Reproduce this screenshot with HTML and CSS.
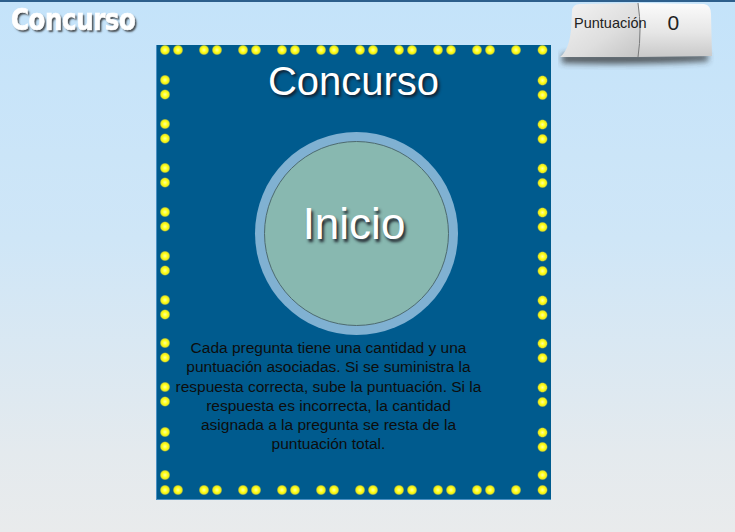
FILE: index.html
```html
<!DOCTYPE html>
<html lang="es">
<head>
<meta charset="utf-8">
<title>Concurso</title>
<link rel="stylesheet" href="styles.css">
</head>
<body>
<header class="topbar">
  <h1 class="app-title">Concurso</h1>
  <div class="score">
    <svg class="score-bg" width="156" height="68" viewBox="0 0 156 68">
      <defs>
        <linearGradient id="paper" x1="0" y1="0" x2="0" y2="1">
          <stop offset="0" stop-color="#fbfbfb"/>
          <stop offset="0.55" stop-color="#e6e6e6"/>
          <stop offset="1" stop-color="#c9c9c9"/>
        </linearGradient>
        <linearGradient id="paperL" x1="0" y1="0" x2="1" y2="1">
          <stop offset="0" stop-color="#f4f4f4"/>
          <stop offset="0.6" stop-color="#dedede"/>
          <stop offset="1" stop-color="#c4c4c4"/>
        </linearGradient>
        <filter id="blur" x="-20%" y="-100%" width="140%" height="300%">
          <feGaussianBlur stdDeviation="3"/>
        </filter>
      </defs>
      <path d="M4 52 L150 52 L150 59 Q80 63 4 61 Z" fill="#303030" opacity="0.8" filter="url(#blur)"/>
      <path d="M14 10 Q14 2 22 2 L80 1 Q84 28 80 55 L2 55 Q11 48 13 28 Z" fill="url(#paperL)"/>
      <path d="M80 1 L146 2 Q153 3 153 12 L154 54 L80 55 Q84 28 80 1 Z" fill="url(#paper)"/>
      <path d="M80 1 Q84 28 80 55" fill="none" stroke="#7a7a7a" stroke-width="1"/>
    </svg>
    <span class="score-label">Puntuación</span>
    <span class="score-value">0</span>
  </div>
</header>

<main class="board">
  <svg class="bulbs" width="395" height="455" viewBox="0 0 395 455" aria-hidden="true">
    <defs>
      <radialGradient id="bulb">
        <stop offset="0" stop-color="#ffffa0"/>
        <stop offset="0.5" stop-color="#ffff10"/>
        <stop offset="0.75" stop-color="#e2e228"/>
        <stop offset="1" stop-color="#8a9a40" stop-opacity="0"/>
      </radialGradient>
      <circle id="b" r="5.5" fill="url(#bulb)"/>
    </defs>
    <!-- top row -->
    <use href="#b" x="9" y="5"/><use href="#b" x="22" y="5"/>
    <use href="#b" x="48" y="5"/><use href="#b" x="61" y="5"/>
    <use href="#b" x="87" y="5"/><use href="#b" x="100" y="5"/>
    <use href="#b" x="126" y="5"/><use href="#b" x="139" y="5"/>
    <use href="#b" x="165" y="5"/><use href="#b" x="178" y="5"/>
    <use href="#b" x="204" y="5"/><use href="#b" x="217" y="5"/>
    <use href="#b" x="243" y="5"/><use href="#b" x="256" y="5"/>
    <use href="#b" x="282" y="5"/><use href="#b" x="295" y="5"/>
    <use href="#b" x="321" y="5"/><use href="#b" x="334" y="5"/>
    <use href="#b" x="360" y="5"/><use href="#b" x="386.5" y="5"/>
    <!-- bottom row -->
    <use href="#b" x="9" y="445"/><use href="#b" x="22" y="445"/>
    <use href="#b" x="48" y="445"/><use href="#b" x="61" y="445"/>
    <use href="#b" x="87" y="445"/><use href="#b" x="100" y="445"/>
    <use href="#b" x="126" y="445"/><use href="#b" x="139" y="445"/>
    <use href="#b" x="165" y="445"/><use href="#b" x="178" y="445"/>
    <use href="#b" x="204" y="445"/><use href="#b" x="217" y="445"/>
    <use href="#b" x="243" y="445"/><use href="#b" x="256" y="445"/>
    <use href="#b" x="282" y="445"/><use href="#b" x="295" y="445"/>
    <use href="#b" x="321" y="445"/><use href="#b" x="334" y="445"/>
    <use href="#b" x="360" y="445"/><use href="#b" x="386.5" y="445"/>
    <!-- left column -->
    <use href="#b" x="9" y="35"/><use href="#b" x="9" y="49.5"/>
    <use href="#b" x="9" y="79"/><use href="#b" x="9" y="93.5"/>
    <use href="#b" x="9" y="123"/><use href="#b" x="9" y="137.5"/>
    <use href="#b" x="9" y="167"/><use href="#b" x="9" y="181.5"/>
    <use href="#b" x="9" y="211"/><use href="#b" x="9" y="225.5"/>
    <use href="#b" x="9" y="255"/><use href="#b" x="9" y="269.5"/>
    <use href="#b" x="9" y="298"/><use href="#b" x="9" y="312.5"/>
    <use href="#b" x="9" y="342"/><use href="#b" x="9" y="356.5"/>
    <use href="#b" x="9" y="387"/><use href="#b" x="9" y="401.5"/>
    <use href="#b" x="9" y="430"/>
    <!-- right column -->
    <use href="#b" x="386.5" y="35.5"/><use href="#b" x="386.5" y="50"/>
    <use href="#b" x="386.5" y="79.5"/><use href="#b" x="386.5" y="94"/>
    <use href="#b" x="386.5" y="123.5"/><use href="#b" x="386.5" y="138"/>
    <use href="#b" x="386.5" y="167.5"/><use href="#b" x="386.5" y="182"/>
    <use href="#b" x="386.5" y="211.5"/><use href="#b" x="386.5" y="226"/>
    <use href="#b" x="386.5" y="255.5"/><use href="#b" x="386.5" y="270"/>
    <use href="#b" x="386.5" y="298.5"/><use href="#b" x="386.5" y="313"/>
    <use href="#b" x="386.5" y="342.5"/><use href="#b" x="386.5" y="357"/>
    <use href="#b" x="386.5" y="387.5"/><use href="#b" x="386.5" y="402"/>
    <use href="#b" x="386.5" y="430"/>
  </svg>

  <h2 class="board-title">Concurso</h2>
  <div class="start-ring">
    <button class="start-btn" type="button">Inicio</button>
  </div>
  <p class="rules">Cada pregunta tiene una cantidad y una puntuación asociadas. Si se suministra la respuesta correcta, sube la puntuación. Si la respuesta es incorrecta, la cantidad asignada a la pregunta se resta de la puntuación total.</p>
</main>
</body>
</html>
```

FILE: styles.css
```css
html {
  margin: 0;
  height: 100%;
}

body {
  margin: 0;
  min-height: 532px;
  box-sizing: border-box;
  border-top: 2px solid #2d5f8c;
  background: linear-gradient(to bottom, #c4e3fa 0%, #cfe6f7 45%, #e4eaee 85%, #e9ebec 100%);
  font-family: "Liberation Sans", Arial, sans-serif;
  overflow: hidden;
}

.topbar {
  display: flex;
  justify-content: space-between;
  align-items: flex-start;
  height: 43px;
  padding: 0 21px 0 11px;
}

.app-title {
  margin: 0;
  font-family: "DejaVu Sans", sans-serif;
  font-weight: bold;
  font-stretch: condensed;
  font-size: 31px;
  line-height: 34px;
  color: #ffffff;
  letter-spacing: -0.5px;
  -webkit-text-stroke: 0.7px #ffffff;
  transform: scaleX(0.88);
  transform-origin: left center;
  text-shadow: 2px 2px 2px rgba(40, 40, 40, 0.8);
}

.score {
  position: relative;
  width: 156px;
  height: 68px;
  display: flex;
  align-items: flex-start;
  padding-left: 16px;
  box-sizing: border-box;
}

.score-bg {
  position: absolute;
  left: 0;
  top: 0;
}

.score-label {
  position: relative;
  margin-top: 13px;
  font-size: 14.5px;
  line-height: 17px;
  color: #222;
}

.score-value {
  position: relative;
  margin-top: 9px;
  margin-left: 21px;
  font-size: 21px;
  line-height: 24px;
  color: #222;
}

.board {
  position: relative;
  width: 395px;
  height: 455px;
  margin-left: 156px;
  box-sizing: border-box;
  padding-top: 13px;
  background: #005b8e;
  box-shadow: inset 1px -1px 0 #4a8fc2;
  display: flex;
  flex-direction: column;
}

.bulbs {
  position: absolute;
  left: 0;
  top: 0;
}

.board-title {
  position: relative;
  margin: 0;
  text-align: center;
  font-size: 40px;
  line-height: 46px;
  font-weight: normal;
  color: #ffffff;
  text-shadow: 2px 2px 3px rgba(20, 20, 30, 0.9);
}

.start-ring {
  position: relative;
  width: 203px;
  height: 203px;
  margin: 28px 0 0 99px;
  padding: 9px;
  box-sizing: border-box;
  border-radius: 50%;
  background: #80b1d2;
}

.start-btn {
  width: 100%;
  height: 100%;
  display: flex;
  align-items: center;
  justify-content: center;
  padding: 0 5px 20px 0;
  box-sizing: border-box;
  border: 1px solid #4d6b70;
  border-radius: 50%;
  background: #88b8b0;
  font-family: "Liberation Sans", Arial, sans-serif;
  font-size: 44px;
  color: #ffffff;
  text-shadow: 2px 3px 3px rgba(20, 20, 30, 0.9);
  cursor: pointer;
}

.rules {
  position: relative;
  width: 309px;
  margin: 3px 0 0 18px;
  text-align: center;
  font-size: 15.5px;
  line-height: 19.3px;
  color: #0d0d0d;
}
```
